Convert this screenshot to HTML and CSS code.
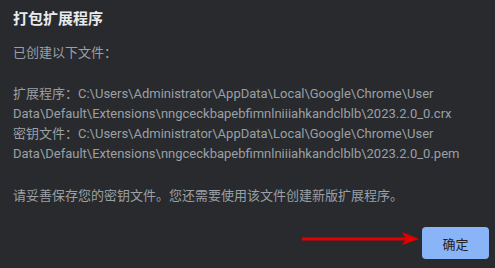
FILE: index.html
```html
<!DOCTYPE html>
<html lang="zh-CN">
<head>
    <meta charset="UTF-8">
    <title>打包扩展程序</title>
    <link rel="stylesheet" href="styles.css">
</head>
<body>
    <div class="dialog">
        <h1 class="dialog-title">打包扩展程序</h1>
        <div class="dialog-body">
            <p class="intro">已创建以下文件：</p>
            <p class="files">扩展程序：C:\Users\Administrator\AppData\Local\Google\Chrome\User Data\Default\Extensions\nngceckbapebfimnlniiiahkandclblb\2023.2.0_0.crx<br>密钥文件：C:\Users\Administrator\AppData\Local\Google\Chrome\User Data\Default\Extensions\nngceckbapebfimnlniiiahkandclblb\2023.2.0_0.pem</p>
            <p class="note">请妥善保存您的密钥文件。您还需要使用该文件创建新版扩展程序。</p>
        </div>
        <div class="dialog-buttons">
            <button class="ok-button">确定</button>
        </div>

        <!-- red annotation arrow -->
        <svg class="arrow" width="120" height="16" viewBox="0 0 120 16">
            <line x1="0" y1="8" x2="104" y2="8" stroke="#e00000" stroke-width="3"/>
            <path d="M100 1 L117 8 L100 14 L104 8 Z" fill="#e00000"/>
        </svg>
    </div>
</body>
</html>
```

FILE: styles.css
```css
body {
    margin: 0;
    padding: 0;
    background-color: #292a2d;
    font-family: Roboto, "Noto Sans CJK SC", sans-serif;
    font-size: 13px;
    color: #9aa0a6;
}
.dialog {
    position: relative;
    height: 268px;
    box-sizing: border-box;
    padding: 10px 6px 0 13px;
}
.dialog-title {
    margin: 0;
    font-size: 15px;
    font-weight: bold;
    line-height: 18px;
    color: #e8eaed;
}
.dialog-body p {
    margin: 0;
    line-height: 20px;
}
.intro {
    padding-top: 15px;
}
.files {
    padding-top: 21px;
    width: 430px;
}
.note {
    padding-top: 22px;
}
.dialog-buttons {
    display: flex;
    justify-content: flex-end;
    padding-top: 21px;
}
.ok-button {
    width: 67px;
    height: 32px;
    border: none;
    border-radius: 4px;
    background-color: #8ab4f8;
    color: #202124;
    font-family: "Noto Sans CJK SC", sans-serif;
    font-size: 13px;
    cursor: pointer;
}
.arrow {
    position: absolute;
    left: 302px;
    top: 231px;
}
```
